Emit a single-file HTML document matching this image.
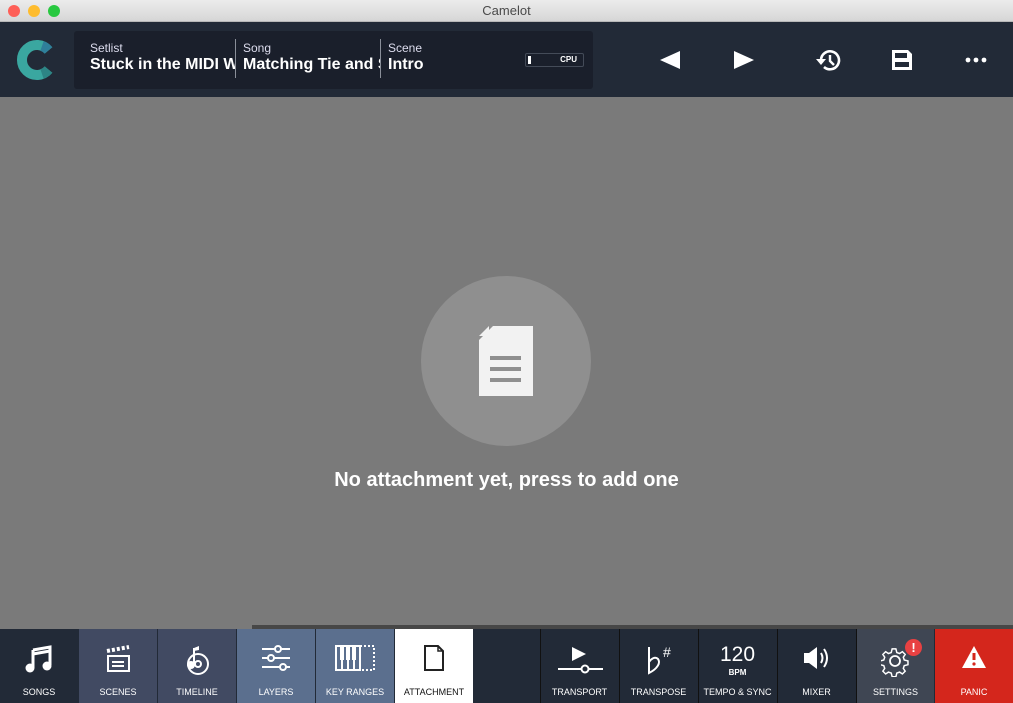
<!DOCTYPE html><html><head><style>
*{margin:0;padding:0;box-sizing:border-box}
body{width:1013px;height:703px;overflow:hidden;background:#7a7a7a;font-family:"Liberation Sans",sans-serif;position:relative}
.tb{position:absolute;top:0;left:0;width:1013px;height:22px;background:linear-gradient(#ececec,#d6d6d6);border-bottom:1px solid #b8b8b8;text-align:center;font-size:13px;line-height:22px;color:#4a4a4a}
.dot{position:absolute;top:5px;width:12px;height:12px;border-radius:50%}
.hd{position:absolute;top:22px;left:0;width:1013px;height:75px;background:#222a37}
.pn{position:absolute;left:74px;top:9px;width:519px;height:58px;background:#1a1f2b;border-radius:3px;color:#fff}
.lb{position:absolute;top:10px;font-size:12px;color:#dde}
.vl{position:absolute;top:25px;font-size:16px;font-weight:bold;white-space:nowrap;overflow:hidden}
.sep{position:absolute;top:8px;width:1px;height:39px;background:#8a8f99}
.bb{position:absolute;top:629px;left:0;width:1013px;height:74px;background:#222a37}
.t{position:absolute;top:0;height:74px;width:78px;color:#fff;font-size:9px;text-align:center}
.t span{position:absolute;bottom:6px;left:0;right:0}
.t svg{position:absolute;left:50%;top:16px;transform:translateX(-50%)}
</style></head><body>
<div class="tb">Camelot
<div class="dot" style="left:8px;background:#fe5f57"></div><div class="dot" style="left:28px;background:#febc2e"></div><div class="dot" style="left:48px;background:#28c840"></div></div>
<div class="hd">
<svg style="position:absolute;left:15px;top:16px" width="44" height="44" viewBox="0 0 44 44"><path d="M33.5 12.4 A15 15 0 1 0 33.5 31.6" fill="none" stroke="#3aa7a0" stroke-width="10"/><path d="M33.5 12.4 A15 15 0 0 0 27 8" fill="none" stroke="#2f7f9a" stroke-width="10"/><path d="M33.5 31.6 A15 15 0 0 1 27 36" fill="none" stroke="#2d8585" stroke-width="10"/></svg>
<div class="pn">
<div class="lb" style="left:16px">Setlist</div><div class="vl" style="left:16px;width:145px">Stuck in the MIDI With You</div>
<div class="sep" style="left:161px"></div>
<div class="lb" style="left:169px">Song</div><div class="vl" style="left:169px;width:137px">Matching Tie and Scarf</div>
<div class="sep" style="left:306px"></div>
<div class="lb" style="left:314px">Scene</div><div class="vl" style="left:314px">Intro</div>
<div style="position:absolute;left:451px;top:22px;width:59px;height:14px;border:1px solid #444b58;border-radius:2px;font-size:8px;font-weight:bold;text-align:right;padding-right:6px;line-height:12px">CPU<div style="position:absolute;left:2px;top:2px;width:3px;height:8px;background:#fff"></div></div>
</div>
<svg style="position:absolute;left:660px;top:29px" width="20" height="18"><path d="M20 0V18L0 9Z" fill="#fff"/></svg>
<svg style="position:absolute;left:734px;top:29px" width="20" height="18"><path d="M0 0V18L20 9Z" fill="#fff"/></svg>
<svg style="position:absolute;left:814px;top:25px" width="28" height="26" viewBox="0 0 28 26"><path d="M7 13 A9 9 0 1 1 10 20" fill="none" stroke="#fff" stroke-width="2.6"/><path d="M2 12h10l-5 6z" fill="#fff"/><path d="M16 8v6l4 4" fill="none" stroke="#fff" stroke-width="2.4"/></svg>
<svg style="position:absolute;left:892px;top:28px" width="20" height="20"><path d="M0 0H16L20 4V20H0Z M3 3V8H15V3Z M3 12V17H17V12Z" fill="#fff" fill-rule="evenodd"/></svg>
<svg style="position:absolute;left:965px;top:35px" width="22" height="6"><circle cx="3" cy="3" r="2.4" fill="#fff"/><circle cx="11" cy="3" r="2.4" fill="#fff"/><circle cx="19" cy="3" r="2.4" fill="#fff"/></svg>
</div>
<div style="position:absolute;left:421px;top:276px;width:170px;height:170px;border-radius:50%;background:#8f8f8f"></div>
<svg style="position:absolute;left:479px;top:326px" width="54" height="70"><path d="M14 0H54V70H0V14Z" fill="#f2f2f2"/><path d="M0 10L10 0V10Z" fill="#f2f2f2"/><rect x="11" y="30" width="31" height="4" fill="#8f8f8f"/><rect x="11" y="41" width="31" height="4" fill="#8f8f8f"/><rect x="11" y="52" width="31" height="4" fill="#8f8f8f"/></svg>
<div style="position:absolute;top:469px;left:0;width:1013px;text-align:center;color:#fff;font-size:20px;font-weight:bold">No attachment yet, press to add one</div>
<div style="position:absolute;left:252px;top:625px;width:761px;height:4px;background:#474747"></div>
<div class="bb">
<div class="t" style="left:0;background:#222a37"><svg width="28" height="28" viewBox="0 0 28 28"><path d="M8 5L25 2V20" fill="none" stroke="#fff" stroke-width="3"/><path d="M8 5V23" stroke="#fff" stroke-width="3"/><path d="M8 9L25 6" stroke="#fff" stroke-width="3"/><circle cx="5" cy="23" r="4.5" fill="#fff"/><circle cx="22" cy="21" r="4.5" fill="#fff"/></svg><span>SONGS</span></div>
<div class="t" style="left:79px;background:#414a62"><svg width="28" height="28" viewBox="0 0 28 28"><path d="M3 6L25 2" stroke="#fff" stroke-width="4" stroke-dasharray="3 2"/><rect x="4" y="11" width="21" height="15" fill="none" stroke="#fff" stroke-width="2"/><path d="M8 17h12M8 21h12" stroke="#fff" stroke-width="2"/></svg><span>SCENES</span></div>
<div class="t" style="left:158px;background:#414a62"><svg width="30" height="30" viewBox="0 0 30 30"><circle cx="16" cy="19" r="10" fill="none" stroke="#fff" stroke-width="2"/><circle cx="16" cy="19" r="3" fill="none" stroke="#fff" stroke-width="2"/><path d="M12 3V20" stroke="#fff" stroke-width="2"/><path d="M12 3L17 1V5L12 6Z" fill="#fff"/><circle cx="9" cy="20" r="4" fill="#fff"/></svg><span>TIMELINE</span></div>
<div class="t" style="left:237px;background:#5b6f8e"><svg width="30" height="28" viewBox="0 0 30 28"><path d="M1 4h28M1 13h28M1 22h28" stroke="#fff" stroke-width="2"/><circle cx="17" cy="4" r="3" fill="#5b6f8e" stroke="#fff" stroke-width="2"/><circle cx="10" cy="13" r="3" fill="#5b6f8e" stroke="#fff" stroke-width="2"/><circle cx="22" cy="22" r="3" fill="#5b6f8e" stroke="#fff" stroke-width="2"/></svg><span>LAYERS</span></div>
<div class="t" style="left:316px;background:#5b6f8e"><svg width="40" height="26" viewBox="0 0 40 26"><rect x="1" y="1" width="24" height="24" fill="none" stroke="#fff" stroke-width="2"/><path d="M7 1v24M13 1v24M19 1v24" stroke="#fff" stroke-width="2"/><path d="M5 1h4v14H5zM11 1h4v14h-4zM17 1h4v14h-4z" fill="#fff"/><path d="M25 1H39V25H25" fill="none" stroke="#fff" stroke-width="2" stroke-dasharray="2 2"/></svg><span>KEY RANGES</span></div>
<div class="t" style="left:395px;background:#fff;color:#111"><svg width="20" height="26" viewBox="0 0 20 26"><path d="M1 1H14L19 6V25H1Z" fill="none" stroke="#222" stroke-width="2"/><path d="M14 1V6H19" fill="none" stroke="#222" stroke-width="1.5"/></svg><span>ATTACHMENT</span></div>
<div class="t" style="left:540px;border-left:1px solid #111"><svg width="48" height="30" viewBox="0 0 48 30"><path d="M16 2V16L30 9Z" fill="#fff"/><path d="M2 24H25M33 24H47" stroke="#fff" stroke-width="2"/><circle cx="29" cy="24" r="3.5" fill="none" stroke="#fff" stroke-width="2"/></svg><span>TRANSPORT</span></div>
<div class="t" style="left:619px;border-left:1px solid #111"><svg width="32" height="32" viewBox="0 0 32 32"><path d="M6 2V28C14 24 18 18 15 14C12 11 8 14 6 17" fill="none" stroke="#fff" stroke-width="2"/><text x="20" y="12" fill="#fff" font-size="14" font-family="Liberation Sans">#</text></svg><span>TRANSPOSE</span></div>
<div class="t" style="left:698px;border-left:1px solid #111"><div style="position:absolute;top:14px;left:0;right:0;font-size:21px">120</div><div style="position:absolute;top:39px;left:0;right:0;font-size:8px;font-weight:bold">BPM</div><span>TEMPO &amp; SYNC</span></div>
<div class="t" style="left:777px;border-left:1px solid #111"><svg width="28" height="26" viewBox="0 0 28 26"><path d="M1 8H6L14 2V24L6 18H1Z" fill="#fff"/><path d="M18 8Q21 13 18 18M21 4Q27 13 21 22" fill="none" stroke="#fff" stroke-width="2"/></svg><span>MIXER</span></div>
<div class="t" style="left:856px;background:#3f4653;border-left:1px solid #111"><svg width="30" height="30" viewBox="0 0 30 30" style="top:18px"><circle cx="14" cy="14" r="5" fill="none" stroke="#fff" stroke-width="1.8"/><path d="M12 2h4l1 4 3 1 3-2 3 3-2 3 1 3 4 1v4l-4 1-1 3 2 3-3 3-3-2-3 1-1 4h-4l-1-4-3-1-3 2-3-3 2-3-1-3-4-1v-4l4-1 1-3-2-3 3-3 3 2 3-1z" fill="none" stroke="#fff" stroke-width="1.6" transform="scale(0.93)"/></svg><div style="position:absolute;left:48px;top:10px;width:17px;height:17px;border-radius:50%;background:#e84142;font-size:13px;font-weight:bold;line-height:17px">!</div><span>SETTINGS</span></div>
<div class="t" style="left:935px;background:#d4261c"><svg width="26" height="24" viewBox="0 0 26 24"><path d="M13 1L25 23H1Z" fill="#fff"/><path d="M13 8V15" stroke="#d4261c" stroke-width="3"/><circle cx="13" cy="19" r="1.6" fill="#d4261c"/></svg><span>PANIC</span></div>
</div>
</body></html>
